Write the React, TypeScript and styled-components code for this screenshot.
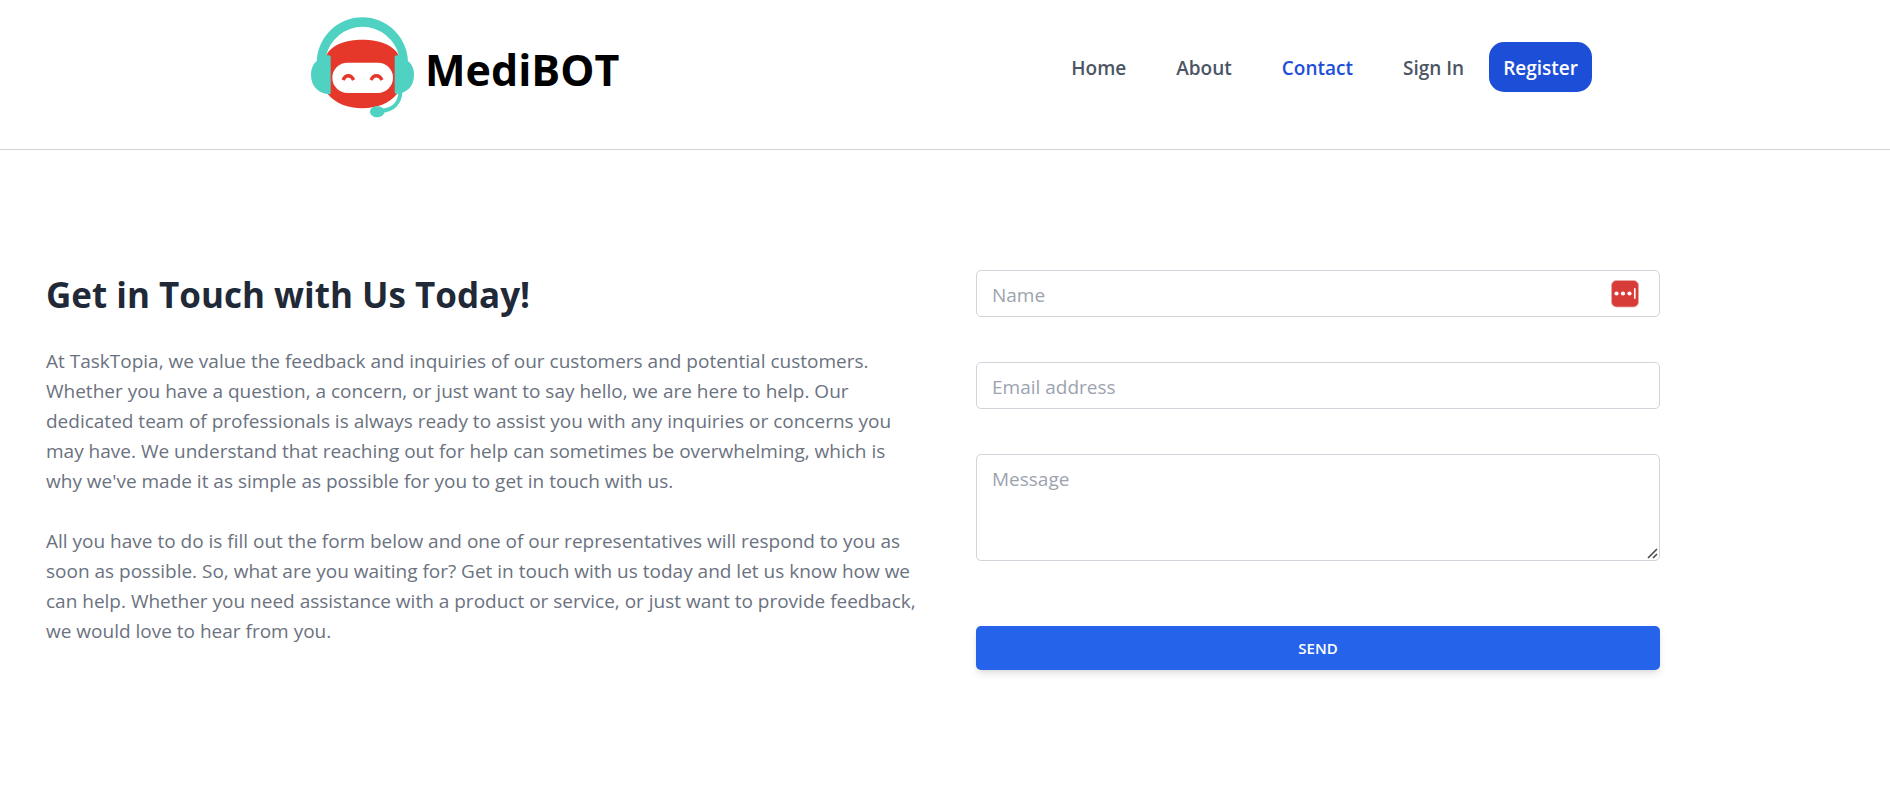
import React from "react";
import styled, { createGlobalStyle } from "styled-components";

const GlobalStyle = createGlobalStyle`
  *, *::before, *::after { box-sizing: border-box; }
  body {
    margin: 0;
    background: #fff;
    color: #000;
    font-family: "Segoe UI", "Open Sans", "Noto Sans", sans-serif;
    font-size: 19px;
    line-height: 30px;
  }
`;

const Header = styled.header`
  border-bottom: 1px solid #d1d5db;
`;

const HeaderInner = styled.div`
  display: flex;
  align-items: flex-start;
  justify-content: space-between;
  max-width: 1294px;
  margin: 0 auto;
  padding: 17px 0 31px 13px;
`;

const Brand = styled.a`
  display: flex;
  align-items: center;
  gap: 11px;
  color: #000;
  text-decoration: none;
`;

const BrandName = styled.span`
  padding-top: 4px;
  font-size: 43px;
  line-height: 60px;
  font-weight: 700;
`;

const Nav = styled.nav`
  display: flex;
  align-items: center;
  padding-top: 25px;
`;

const NavLink = styled.a<{ $active?: boolean }>`
  padding: 11px 25px 9px;
  color: ${(p) => (p.$active ? "#1d4ed8" : "#4b5563")};
  font-weight: 600;
  text-decoration: none;
`;

const RegisterLink = styled.a`
  padding: 11px 14px 9px;
  border-radius: 15px;
  background: #1d4ed8;
  color: #fff;
  font-weight: 600;
  text-decoration: none;
`;

const Main = styled.main`
  display: grid;
  grid-template-columns: 876fr 868fr;
  gap: 54px;
  padding: 120px 46px;
`;

const Title = styled.h1`
  margin: 0;
  padding: 1px 0 27px;
  color: #1f2937;
  font-size: 35px;
  line-height: 48px;
  font-weight: 700;
`;

const Paragraph = styled.p`
  margin: 0 0 30px;
  color: #6b7280;
`;

const Form = styled.form`
  display: flex;
  flex-direction: column;
  gap: 45px;
  max-width: 684px;
`;

const Field = styled.div`
  position: relative;
`;

const Input = styled.input`
  display: block;
  width: 100%;
  height: 47px;
  padding: 9px 15px 7px;
  border: 1px solid #d1d5db;
  border-radius: 5px;
  background: #fff;
  font: inherit;
  &::placeholder { color: #9ca3af; }
`;

const TextArea = styled.textarea`
  display: block;
  width: 100%;
  height: 107px;
  padding: 9px 15px 7px;
  border: 1px solid #d1d5db;
  border-radius: 5px;
  background: #fff;
  font: inherit;
  resize: vertical;
  &::placeholder { color: #9ca3af; }
  &::-webkit-resizer { background: transparent; }
`;

const ResizeGrip = styled.svg`
  position: absolute;
  right: 1px;
  bottom: 2px;
  pointer-events: none;
`;

const FillButton = styled.button`
  position: absolute;
  top: 10px;
  right: 21px;
  width: 28px;
  height: 28px;
  padding: 0;
  border: 0;
  background: none;
`;

const SendButton = styled.button`
  height: 44px;
  margin-top: 20px;
  border: 0;
  border-radius: 5px;
  background: #2563eb;
  color: #fff;
  box-shadow: 0 5px 8px -1px rgba(0, 0, 0, 0.1), 0 2px 5px -2px rgba(0, 0, 0, 0.1);
  font-family: inherit;
  font-size: 15px;
  line-height: 24px;
  font-weight: 600;
`;

function BotLogo() {
  return (
    <svg width="103" height="101" viewBox="33 49 309 303" aria-hidden="true">
      <path
        d="M78 167C91 132 138 117 187 117S283 132 297 167L290 281C268 309 230 323 187 323S106 309 84 281Z"
        fill="#e5382b"
      />
      <rect x="97" y="186" width="182" height="91" rx="45.5" fill="#fff" />
      <g fill="none" stroke="#e5382b" strokeWidth="10">
        <path d="M129 238C137 221 153 221 161 238" />
        <path d="M213 238C221 221 238 221 246 238" />
      </g>
      <path
        d="M301 272C301 306 280 328 243 331"
        fill="none"
        stroke="#50d2c2"
        strokeWidth="12"
      />
      <path d="M253 327C246 318 237 317 231 317C218 317 210 325 210 333S219 350 231 350C241 350 248 346 253 338Z" fill="#50d2c2" />
      <g fill="#50d2c2">
        <path d="M50 187A137 137 0 0 1 324 187L297 167A112 112 0 0 0 78 167Z" />
        <path d="M78 164H86Q92 164 92 170V276Q92 282 86 281C60 278 33 261 33 222C33 204 40 190 50 182Z" />
        <path d="M297 164H290Q284 164 284 170V274Q284 280 290 280C316 278 342 261 342 222C342 204 335 190 324 182Z" />
      </g>
    </svg>
  );
}

function PasswordIcon() {
  return (
    <svg width="28" height="28" viewBox="0 0 28 28" aria-hidden="true">
      <rect x="0.5" y="0.5" width="27" height="26.5" rx="5" fill="#d73c38" stroke="#e9a9a8" strokeWidth="0.8" />
      <g fill="#fff">
        <circle cx="5.5" cy="13.5" r="2.1" />
        <circle cx="12" cy="13.5" r="2.1" />
        <circle cx="18.5" cy="13.5" r="2.1" />
        <rect x="23" y="8" width="1.6" height="11" rx="0.8" />
      </g>
    </svg>
  );
}

export default function App() {
  return (
    <>
      <GlobalStyle />
      <Header>
        <HeaderInner>
          <Brand href="#">
            <BotLogo />
            <BrandName>MediBOT</BrandName>
          </Brand>
          <Nav>
            <NavLink href="#home">Home</NavLink>
            <NavLink href="#about">About</NavLink>
            <NavLink href="#contact" $active aria-current="page">Contact</NavLink>
            <NavLink href="#signin">Sign In</NavLink>
            <RegisterLink href="#register">Register</RegisterLink>
          </Nav>
        </HeaderInner>
      </Header>
      <Main>
        <section>
          <Title>Get in Touch with Us Today!</Title>
          <Paragraph>
            At TaskTopia, we value the feedback and inquiries of our customers and potential customers. Whether
            you have a question, a concern, or just want to say hello, we are here to help. Our dedicated team of
            professionals is always ready to assist you with any inquiries or concerns you may have. We understand
            that reaching out for help can sometimes be overwhelming, which is why we've made it as simple as
            possible for you to get in touch with us.
          </Paragraph>
          <Paragraph>
            All you have to do is fill out the form below and one of our representatives will respond to you as
            soon as possible. So, what are you waiting for? Get in touch with us today and let us know how we can
            help. Whether you need assistance with a product or service, or just want to provide feedback, we
            would love to hear from you.
          </Paragraph>
        </section>
        <Form onSubmit={(e: React.FormEvent) => e.preventDefault()}>
          <Field>
            <Input type="text" placeholder="Name" aria-label="Name" />
            <FillButton type="button" aria-label="Fill with password manager">
              <PasswordIcon />
            </FillButton>
          </Field>
          <Field>
            <Input type="email" placeholder="Email address" aria-label="Email address" />
          </Field>
          <Field>
            <TextArea placeholder="Message" aria-label="Message" />
            <ResizeGrip width="12" height="12" viewBox="0 0 12 12" aria-hidden="true">
              <path d="M1 11L10 2M6 11L10 7" stroke="#4a4a4a" strokeWidth="1.6" />
            </ResizeGrip>
          </Field>
          <SendButton type="submit">SEND</SendButton>
        </Form>
      </Main>
    </>
  );
}
